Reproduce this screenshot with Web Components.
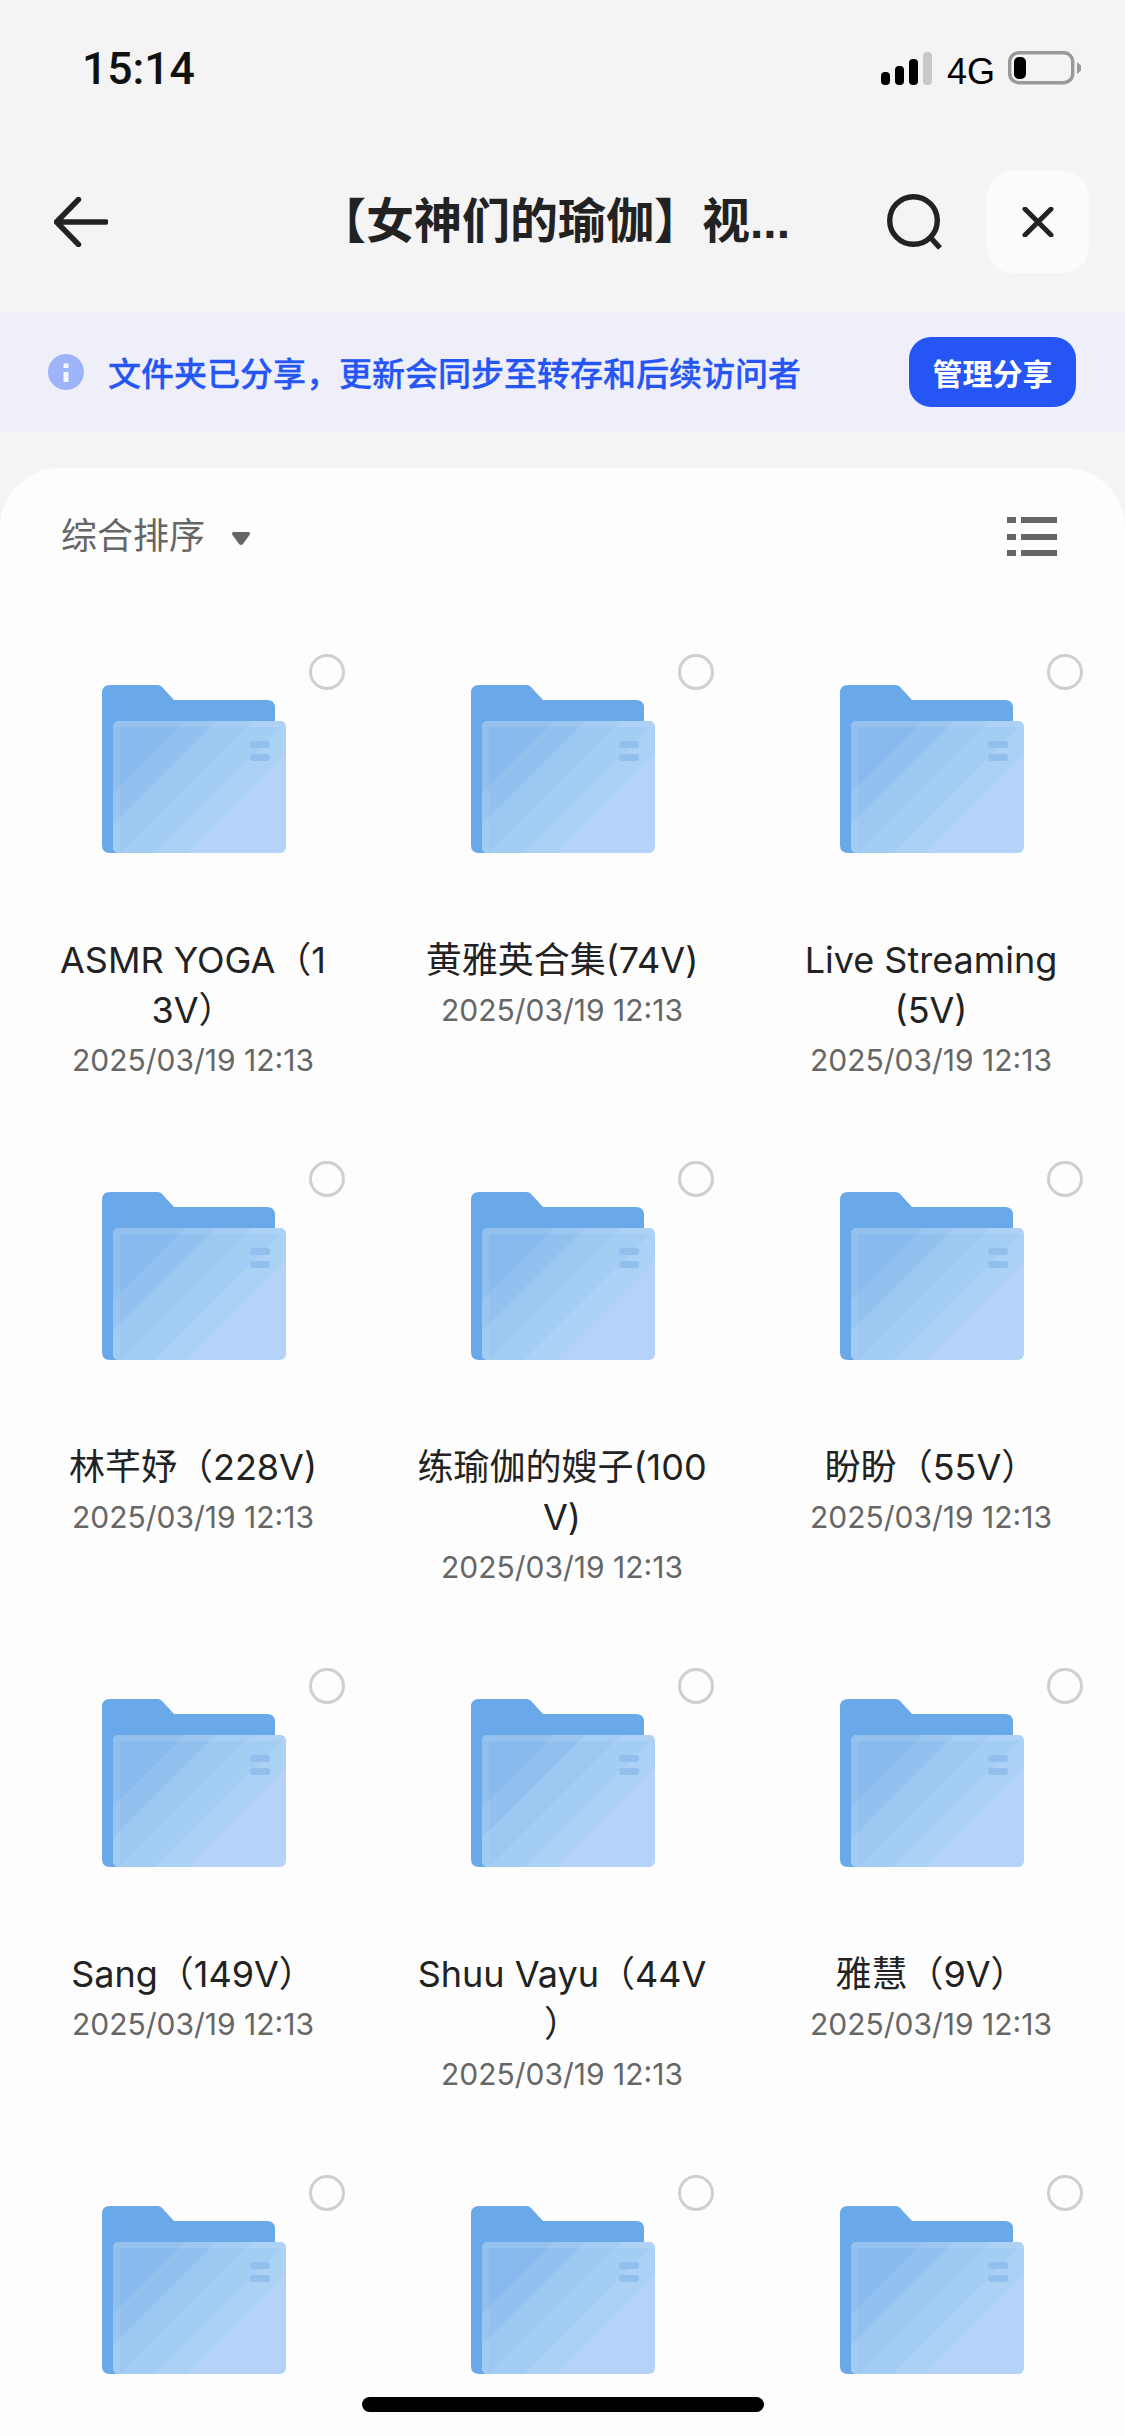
<!DOCTYPE html>
<html lang="zh">
<head>
<meta charset="utf-8">
<title>Folder</title>
<style>
  html, body { margin: 0; padding: 0; background: #f4f4f4; }
  body { width: 1125px; height: 2436px; overflow: hidden; position: relative; font-family: Inter, "Noto Sans CJK SC", sans-serif; }
</style>
</head>
<body>
<status-bar time="15:14" network="4G"></status-bar>
<nav-bar>【女神们的瑜伽】视...</nav-bar>
<share-banner action="管理分享">文件夹已分享，更新会同步至转存和后续访问者</share-banner>
<file-list sort="综合排序">
  <file-item>ASMR YOGA（1<br>3V）<span slot="date">2025/03/19 12:13</span></file-item>
  <file-item>黄雅英合集(74V)<span slot="date">2025/03/19 12:13</span></file-item>
  <file-item>Live Streaming<br>(5V)<span slot="date">2025/03/19 12:13</span></file-item>
  <file-item>林芊妤（228V)<span slot="date">2025/03/19 12:13</span></file-item>
  <file-item>练瑜伽的嫂子(100<br>V)<span slot="date">2025/03/19 12:13</span></file-item>
  <file-item>盼盼（55V）<span slot="date">2025/03/19 12:13</span></file-item>
  <file-item>Sang（149V）<span slot="date">2025/03/19 12:13</span></file-item>
  <file-item>Shuu Vayu（44V<br>）<span slot="date">2025/03/19 12:13</span></file-item>
  <file-item>雅慧（9V）<span slot="date">2025/03/19 12:13</span></file-item>
  <file-item></file-item>
  <file-item></file-item>
  <file-item></file-item>
</file-list>
<home-indicator></home-indicator>

<script>
(function () {
  const FONT = 'Inter, "Noto Sans CJK SC", sans-serif';
  const CJK = '"Liberation Sans", "Noto Sans CJK SC", sans-serif';

  class StatusBar extends HTMLElement {
    connectedCallback() {
      const time = this.getAttribute('time');
      const network = this.getAttribute('network');
      this.attachShadow({ mode: 'open' }).innerHTML = `
        <style>
          :host { display: flex; align-items: flex-start; justify-content: space-between; box-sizing: border-box; height: 171px; padding: 46px 43px 0 82px; color: #000; font-family: ${CJK}; }
          .time { font-family: Roboto, sans-serif; font-size: 44.5px; line-height: 46px; font-weight: 500; color: #111; }
          .right { display: flex; align-items: flex-start; margin-top: 6px; }
          .net { font-size: 36px; line-height: 36px; margin: 2px 13px 0 14px; }
          svg { display: block; }
        </style>
        <div class="time">${time}</div>
        <div class="right">
          <svg width="52" height="33" viewBox="0 0 52 33">
            <rect x="0" y="20" width="9" height="13" rx="4" fill="#000"/>
            <rect x="14" y="14" width="9" height="19" rx="4" fill="#000"/>
            <rect x="28" y="7" width="9" height="26" rx="4" fill="#000"/>
            <rect x="42" y="0" width="9" height="33" rx="4" fill="#c8c8c8"/>
          </svg>
          <div class="net">${network}</div>
          <svg width="74" height="34" viewBox="0 0 74 34" style="margin-top:-1px">
            <rect x="1.7" y="1.7" width="63" height="30" rx="9" fill="none" stroke="#999" stroke-width="3.4"/>
            <rect x="6" y="6" width="12" height="22" rx="5" fill="#000"/>
            <path d="M69 11 L73 14.5 V19.5 L69 23 Z" fill="#999"/>
          </svg>
        </div>
      `;
    }
  }

  class NavBar extends HTMLElement {
    connectedCallback() {
      this.attachShadow({ mode: 'open' }).innerHTML = `
        <style>
          :host { display: flex; align-items: center; box-sizing: border-box; height: 102px; padding: 0 36px 0 54px; color: #222; font-family: ${CJK}; }
          .title { flex: 1; min-width: 0; margin-left: 210px; font-size: 48px; line-height: 56px; font-weight: 700; white-space: nowrap; }
          .search { margin: 0 44px 0 0; }
          .close { display: flex; align-items: center; justify-content: center; width: 102px; height: 102px; border-radius: 26px; background: #fbfbfb; }
          svg { display: block; flex: none; }
        </style>
        <svg width="54" height="50" viewBox="0 0 54 50">
          <path d="M52 25 H3 M24.5 2.5 L2.5 25 L24.5 47.5" fill="none" stroke="#222" stroke-width="5.4" stroke-linecap="round" stroke-linejoin="round"/>
        </svg>
        <div class="title"><slot></slot></div>
        <svg class="search" width="56" height="56" viewBox="0 0 56 56">
          <circle cx="26.5" cy="26.5" r="23.8" fill="none" stroke="#222" stroke-width="5.4"/>
          <path d="M43 43 L53 54" fill="none" stroke="#222" stroke-width="5.4"/>
        </svg>
        <div class="close">
          <svg width="32" height="30" viewBox="0 0 32 30">
            <path d="M3 2 L29 28 M29 2 L3 28" fill="none" stroke="#222" stroke-width="5" stroke-linecap="round"/>
          </svg>
        </div>
      `;
    }
  }

  class ShareBanner extends HTMLElement {
    connectedCallback() {
      const action = this.getAttribute('action');
      this.attachShadow({ mode: 'open' }).innerHTML = `
        <style>
          :host { display: flex; align-items: center; box-sizing: border-box; height: 120px; margin-top: 39px; padding: 0 49px 0 48px; background: #eeeff8; font-family: ${CJK}; }
          .text { flex: 1; margin: 5px 0 0 24px; font-size: 33px; line-height: 44px; font-weight: 500; color: #2655f5; white-space: nowrap; -webkit-text-stroke: .3px #2655f5; }
          .btn { display: flex; align-items: center; justify-content: center; width: 167px; height: 70px; border-radius: 22px; background: #2655f5; color: #fff; font-size: 30px; font-weight: 700; }
          svg { display: block; flex: none; }
        </style>
        <svg width="36" height="36" viewBox="0 0 36 36">
          <circle cx="18" cy="18" r="18" fill="#9db4f8"/>
          <rect x="15.5" y="9.5" width="5" height="4.5" fill="#f4f6fe"/>
          <rect x="15.5" y="18" width="5" height="10" fill="#f4f6fe"/>
        </svg>
        <div class="text"><slot></slot></div>
        <div class="btn">${action}</div>
      `;
    }
  }

  class FileList extends HTMLElement {
    connectedCallback() {
      const sort = this.getAttribute('sort');
      this.attachShadow({ mode: 'open' }).innerHTML = `
        <style>
          :host { display: block; margin-top: 36px; border-radius: 60px 60px 0 0; background: #fdfdfd; font-family: ${CJK}; }
          .bar { display: flex; align-items: center; justify-content: space-between; box-sizing: border-box; height: 172px; padding: 0 68px 34px 61px; }
          .sort { display: flex; align-items: center; font-size: 36px; line-height: 48px; color: #666; }
          .sort svg { margin-left: 26px; margin-top: 2px; }
          .grid { display: grid; grid-template-columns: repeat(3, 290px); column-gap: 79px; row-gap: 62px; padding-left: 48px; }
          svg { display: block; }
        </style>
        <div class="bar">
          <div class="sort">${sort}
            <svg width="20" height="15" viewBox="0 0 20 15"><path d="M3 1 H17 Q20 1 18.5 4 L12 13 Q10 15 8 13 L1.5 4 Q0 1 3 1 Z" fill="#666"/></svg>
          </div>
          <svg width="50" height="40" viewBox="0 0 50 40">
            <rect x="0" y="0" width="9" height="6" fill="#666"/><rect x="14" y="0" width="36" height="6" fill="#666"/>
            <rect x="0" y="17" width="9" height="6" fill="#666"/><rect x="14" y="17" width="36" height="6" fill="#666"/>
            <rect x="0" y="33" width="9" height="6" fill="#666"/><rect x="14" y="33" width="36" height="6" fill="#666"/>
          </svg>
        </div>
        <div class="grid"><slot></slot></div>
      `;
    }
  }

  class FolderIcon extends HTMLElement {
    connectedCallback() {
      this.attachShadow({ mode: 'open' }).innerHTML = `
        <style>
          :host { display: block; width: 184px; height: 168px; }
          svg { display: block; }
        </style>
        <svg width="184" height="168" viewBox="0 0 184 168">
          <defs><clipPath id="front"><rect x="11" y="36" width="173" height="132" rx="6"/></clipPath></defs>
          <path d="M8 0 H55 Q59 0 61 3 L72 15 H165 Q173 15 173 23 V168 H8 Q0 168 0 160 V8 Q0 0 8 0 Z" fill="#69a9ea"/>
          <g clip-path="url(#front)">
            <rect x="11" y="36" width="173" height="132" fill="#b5d3f8"/>
            <path d="M0 0 H253 L85 168 H0 Z" fill="#abd1f5"/>
            <path d="M0 0 H221 L53 168 H0 Z" fill="#a4cdf4"/>
            <path d="M0 0 H186 L18 168 H0 Z" fill="#9cc8f2"/>
            <path d="M0 0 H150 L0 150 Z" fill="#92c1f0"/>
            <path d="M0 0 H119 L0 119 Z" fill="#88baed"/>
            <rect x="11" y="36" width="173" height="6" fill="#fff" fill-opacity=".1"/>
            <rect x="11" y="42" width="7" height="126" fill="#fff" fill-opacity=".08"/>
            <rect x="148" y="56" width="20" height="7" rx="3" fill="#93bfee"/>
            <rect x="148" y="69" width="20" height="7" rx="3" fill="#93bfee"/>
          </g>
        </svg>
      `;
    }
  }

  class FileItem extends HTMLElement {
    connectedCallback() {
      this.attachShadow({ mode: 'open' }).innerHTML = `
        <style>
          :host { display: block; position: relative; width: 290px; text-align: center; font-family: ${FONT}; }
          .thumb { display: flex; justify-content: center; box-sizing: border-box; height: 295px; padding: 45px 0 0 2px; }
          .radio { position: absolute; top: 14px; left: 261px; box-sizing: border-box; width: 36px; height: 36px; border: 3.5px solid #cfcfd2; border-radius: 50%; }
          .name { font-size: 36px; line-height: 50px; color: #222; white-space: nowrap; }
          .date { font-size: 30px; line-height: 50px; color: #666; white-space: nowrap; }
        </style>
        <div class="thumb"><folder-icon></folder-icon></div>
        <div class="radio"></div>
        <div class="name"><slot></slot></div>
        <div class="date"><slot name="date"></slot></div>
      `;
    }
  }

  class HomeIndicator extends HTMLElement {
    connectedCallback() {
      this.attachShadow({ mode: 'open' }).innerHTML = `
        <style>
          :host { display: block; position: absolute; left: 362px; top: 2397px; width: 402px; height: 15px; border-radius: 8px; background: #000; }
        </style>
      `;
    }
  }

  customElements.define('status-bar', StatusBar);
  customElements.define('nav-bar', NavBar);
  customElements.define('share-banner', ShareBanner);
  customElements.define('file-list', FileList);
  customElements.define('folder-icon', FolderIcon);
  customElements.define('file-item', FileItem);
  customElements.define('home-indicator', HomeIndicator);
})();
</script>
</body>
</html>
